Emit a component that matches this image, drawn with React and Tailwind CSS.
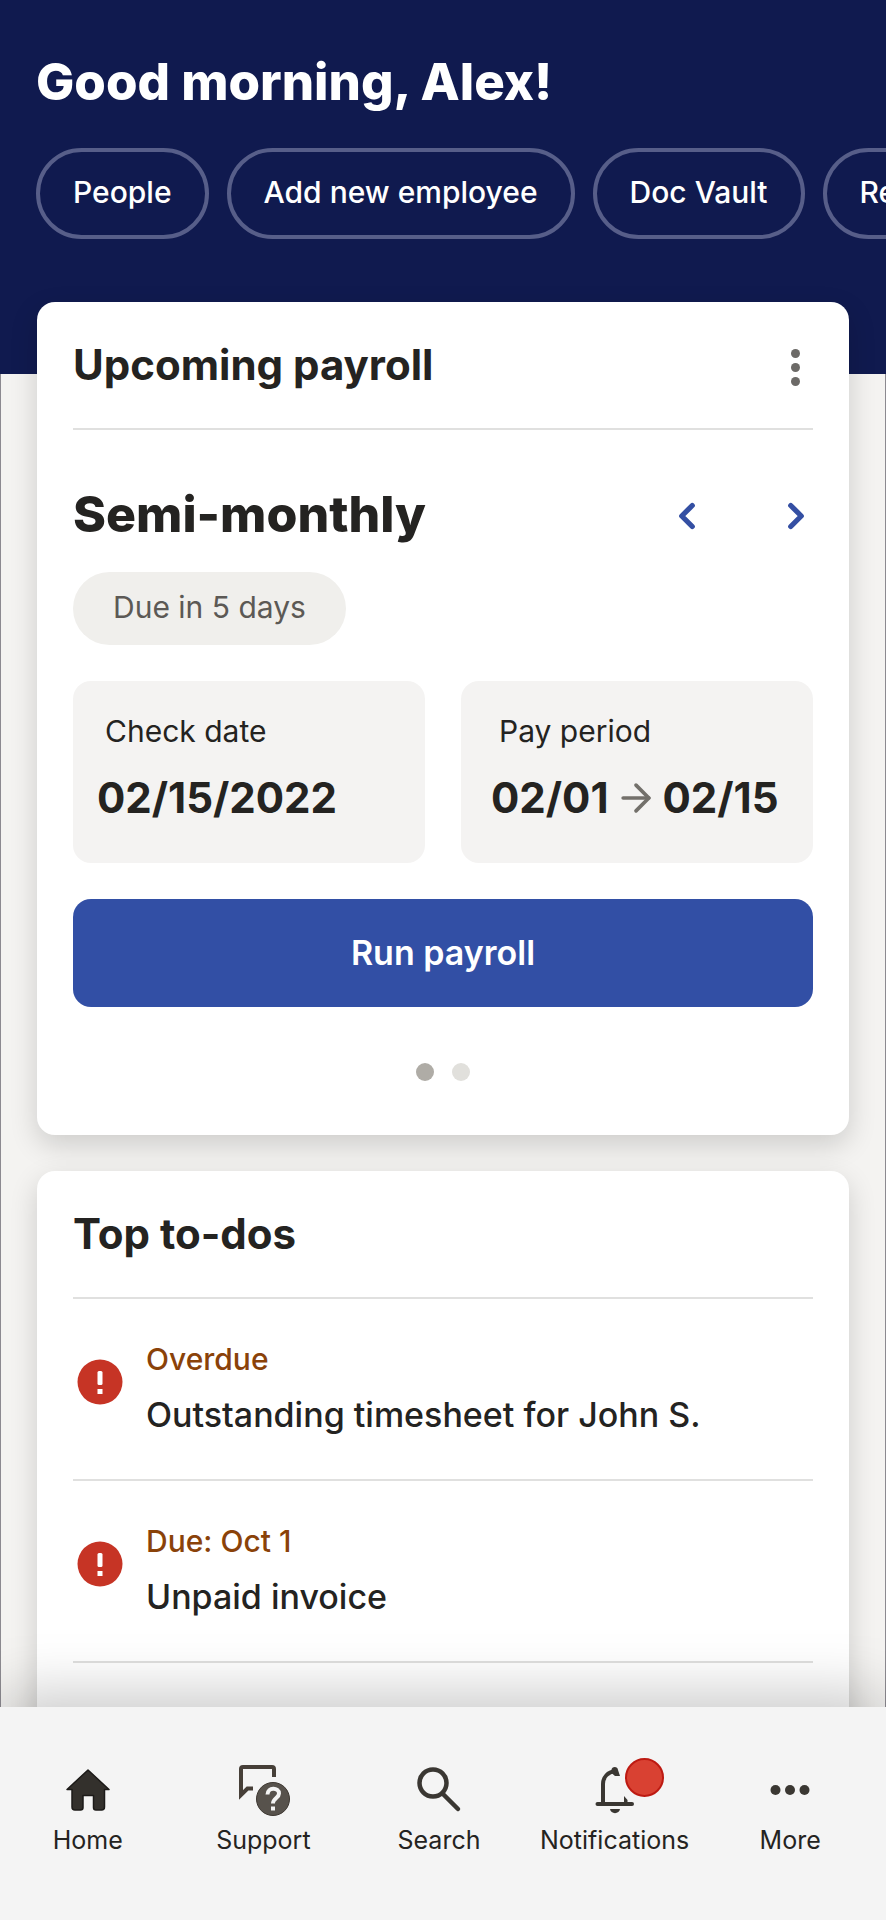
import { ChevronLeft, ChevronRight, ArrowRight } from 'lucide-react'

const SHORTCUTS = ['People', 'Add new employee', 'Doc Vault', 'Reports']

const TODOS = [
  { due: 'Overdue', title: 'Outstanding timesheet for John S.' },
  { due: 'Due: Oct 1', title: 'Unpaid invoice' },
]

const NAV = [
  { label: 'Home', icon: HomeIcon, active: true },
  { label: 'Support', icon: SupportIcon },
  { label: 'Search', icon: SearchIcon },
  { label: 'Notifications', icon: BellIcon, badge: true },
  { label: 'More', icon: MoreIcon },
]

function HomeIcon() {
  return (
    <svg viewBox="0 0 60 60" className="h-15 w-15" fill="#33302c" stroke="#1c1a18" strokeWidth="1.5" strokeLinejoin="round">
      <path d="M30 10 51 29.500H46.500V47Q46.500 50 43.500 50H38Q35.500 50 35.500 47.500V35.500H25V47.500Q25 50 22.500 50H17Q14 50 14 47V29.500H9Z" />
    </svg>
  )
}

function SupportIcon() {
  return (
    <svg viewBox="0 0 60 60" className="h-15 w-15">
      <path d="M41 17V9Q41 7 39 7H10Q8 7 8 9V35L14.500 28.500H20" fill="none" stroke="#463f38" strokeWidth="4" />
      <circle cx="40" cy="39" r="16.500" fill="#57524c" stroke="#3d3731" />
      <path d="M34.500 34.500C34.500 27 46 27 46 33.500C46 38 40 38 40 43.500" fill="none" stroke="#f4f4f4" strokeWidth="4" />
      <rect x="38" y="46.500" width="4" height="4" fill="#f4f4f4" />
    </svg>
  )
}

function SearchIcon() {
  return (
    <svg viewBox="0 0 60 60" className="h-15 w-15" fill="none" stroke="#3a3732" strokeWidth="4.500" strokeLinecap="round">
      <circle cx="24" cy="23" r="13.500" />
      <path d="M34 34 49 49" />
    </svg>
  )
}

function BellIcon() {
  return (
    <svg viewBox="0 0 60 60" className="h-15 w-15" fill="none" stroke="#3a3732" strokeWidth="4" strokeLinecap="round">
      <path d="M12.500 44H47" />
      <path d="M18 43V24C18 17 23 12 30 11" />
      <path d="M39 36 42.500 40V43H39Z" fill="#3a3732" stroke="none" />
      <path d="M26.500 10C26.500 6 33 6 33 10L35 16H30L26.500 13Z" fill="#3a3732" stroke="none" />
      <path d="M25 49H35C34.500 54.500 25.500 54.500 25 49Z" fill="#3a3732" stroke="none" />
    </svg>
  )
}

function MoreIcon() {
  return (
    <svg viewBox="0 0 60 60" className="h-15 w-15" fill="#3a3732">
      <circle cx="15.500" cy="30" r="5" />
      <circle cx="30" cy="30" r="5" />
      <circle cx="44.500" cy="30" r="5" />
    </svg>
  )
}

function AlertIcon() {
  return (
    <svg viewBox="0 0 46 46" className="mt-[18px] h-[46px] w-[46px] shrink-0">
      <circle cx="23" cy="23" r="22.500" fill="#c63425" />
      <rect x="20.500" y="12" width="5" height="14" rx="1.500" fill="#fff" />
      <rect x="20.500" y="30" width="5" height="5" fill="#fff" />
    </svg>
  )
}

function Card({ title, action, children }) {
  return (
    <section className="rounded-[18px] bg-white px-9 shadow-[0_10px_28px_rgba(0,0,0,0.16)]">
      <div className="flex items-center justify-between border-b-2 border-[#e0e0df] pt-[38px] pb-[38px]">
        <h2 className="text-[42px] leading-[50px] font-bold">{title}</h2>
        {action}
      </div>
      {children}
    </section>
  )
}

export default function App() {
  return (
    <div className="flex h-screen flex-col overflow-hidden bg-[#f4f3f1] font-['Inter',sans-serif] text-[#242321]">
      <main className="min-h-0 flex-1 overflow-hidden">
        <header className="bg-[#101a4f] pt-[52px] pb-[135px] pl-9">
          <h1 className="text-[51px] leading-[60px] font-extrabold text-white">Good morning, Alex!</h1>
          <div className="mt-9 flex gap-[18px] overflow-hidden">
            {SHORTCUTS.map((s) => (
              <button
                key={s}
                type="button"
                className="h-[91px] shrink-0 rounded-full border-4 border-[#575e89] px-[33px] pb-1 text-[30px] leading-9 font-medium text-white"
              >
                {s}
              </button>
            ))}
          </div>
        </header>

        <div className="flow-root border-x border-[#8c8a90] px-9">
          <div className="-mt-[72px] flex flex-col gap-9">
            <Card
              title="Upcoming payroll"
              action={
                <button type="button" aria-label="Payroll options" className="flex w-9 flex-col items-center gap-[5px] pt-1">
                  <span className="h-[9px] w-[9px] rounded-full bg-[#6c6a67]" />
                  <span className="h-[9px] w-[9px] rounded-full bg-[#6c6a67]" />
                  <span className="h-[9px] w-[9px] rounded-full bg-[#6c6a67]" />
                </button>
              }
            >
              <div className="flex items-center justify-between pt-[54px]">
                <h3 className="text-[50px] leading-[60px] font-extrabold">Semi-monthly</h3>
                <div className="-mr-1 flex gap-[67px] pt-1 text-[#344fa3]">
                  <button type="button" aria-label="Previous payroll">
                    <ChevronLeft className="h-[42px] w-[42px]" strokeWidth={3} />
                  </button>
                  <button type="button" aria-label="Next payroll">
                    <ChevronRight className="h-[42px] w-[42px]" strokeWidth={3} />
                  </button>
                </div>
              </div>

              <p className="mt-7 flex h-[73px] w-fit items-center rounded-full bg-[#f0efec] px-10 pb-1 text-[30px] leading-9 text-[#5c5955]">
                Due in 5 days
              </p>

              <dl className="mt-9 grid grid-cols-2 gap-9">
                <div className="rounded-[18px] bg-[#f4f3f2] px-6 pt-8 pb-9">
                  <dt className="px-2 text-[30px] leading-9">Check date</dt>
                  <dd className="mt-5 text-[42px] leading-[58px] font-bold">02/15/2022</dd>
                </div>
                <div className="rounded-[18px] bg-[#f4f3f2] pt-8 pb-9 pl-[30px]">
                  <dt className="px-2 text-[30px] leading-9">Pay period</dt>
                  <dd className="mt-5 flex items-center gap-[5px] text-[42px] leading-[58px] font-bold whitespace-nowrap">
                    02/01
                    <ArrowRight className="h-11 w-11 shrink-0 text-[#73706b]" strokeWidth={2} />
                    02/15
                  </dd>
                </div>
              </dl>

              <button
                type="button"
                className="mt-9 h-[108px] w-full rounded-[18px] bg-[#324fa5] text-[34px] leading-10 font-semibold text-white"
              >
                Run payroll
              </button>

              <div className="flex justify-center gap-[18px] pt-14 pb-[54px]">
                <span className="h-[18px] w-[18px] rounded-full bg-[#afaca6]" />
                <span className="h-[18px] w-[18px] rounded-full bg-[#e1e0dc]" />
              </div>
            </Card>

            <Card title="Top to-dos">
              <ul className="pb-24">
                {TODOS.map((t) => (
                  <li key={t.title} className="flex gap-[23px] border-b-2 border-[#e0e0df] pt-[42px] pb-11 pl-1">
                    <AlertIcon />
                    <div>
                      <p className="text-[30px] leading-9 font-medium text-[#8a4209]">{t.due}</p>
                      <p className="mt-[18px] text-[34px] leading-10 font-medium">{t.title}</p>
                    </div>
                  </li>
                ))}
              </ul>
            </Card>
          </div>
        </div>
      </main>

      <nav className="relative z-10 grid shrink-0 grid-cols-5 bg-[#f4f4f4] pt-[53px] pr-2 pb-[64px] shadow-[0_-12px_56px_rgba(0,0,0,0.22)]">
        {NAV.map(({ label, icon: Icon, active, badge }) => (
          <a key={label} href="#" aria-current={active ? 'page' : undefined} className="flex flex-col items-center gap-1">
            <span className="relative">
              <Icon />
              {badge && (
                <span className="absolute -top-[2px] left-10 h-[39px] w-[39px] rounded-full border-2 border-[#bd1a12] bg-[#d94132]" />
              )}
            </span>
            <span className="text-[25px] leading-8">{label}</span>
          </a>
        ))}
      </nav>
    </div>
  )
}
